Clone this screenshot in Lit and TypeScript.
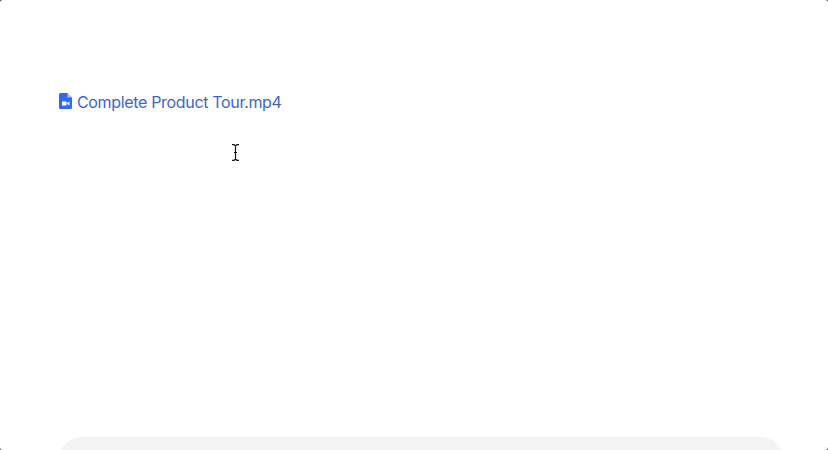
import { LitElement, css, html } from 'lit'
import { customElement } from 'lit/decorators.js'

@customElement('app-root')
export class AppRoot extends LitElement {
  static styles = css`
    :host {
      display: block;
      width: 828px;
      height: 450px;
      background: #555;
      overflow: hidden;
    }
    .page {
      position: relative;
      box-sizing: border-box;
      height: 450px;
      padding: 92px 44px 0 58px;
      display: flex;
      flex-direction: column;
      background: #fff;
      border-radius: 3px;
      overflow: hidden;
      font-family: Inter, 'Liberation Sans', sans-serif;
    }
    .file {
      display: flex;
      align-items: center;
      gap: 4px;
      height: 20px;
      font-size: 16px;
      line-height: 20px;
      letter-spacing: -0.33px;
      color: #3e66c5;
    }
    .file svg {
      width: 15px;
      height: 18px;
      flex: none;
      margin-top: -3px;
    }
    .panel {
      flex: none;
      margin-top: auto;
      margin-bottom: -47px;
      height: 60px;
      background: #f3f4f6;
      border-radius: 24px 24px 0 0;
    }
    .cursor {
      position: absolute;
      left: 231px;
      top: 144px;
      width: 9px;
      height: 17px;
    }
  `

  render() {
    return html`
      <div class="page">
        <div class="file">
          <svg viewBox="0 0 15 18">
            <path fill="#2f6bec" d="M2.500 1h7L14 5.500V15.500A1.500 1.500 0 0 1 12.500 17h-10A1.500 1.500 0 0 1 1 15.500V2.500A1.500 1.500 0 0 1 2.500 1z" />
            <path fill="#a9c4fa" d="M9.500 1 14 5.500H9.500z" />
            <path fill="#fff" d="M4 9.500h4.500v4H4zM9 11l2.500-1.500v4L9 12z" />
          </svg>
          <span>Complete Product Tour.mp4</span>
        </div>
        <div class="panel"></div>
        <svg class="cursor" viewBox="0 0 9 17" fill="none" stroke="#111" stroke-width="1.2">
          <path d="M1 .7h2l1.500 1 1.500-1h2M4.500 1.700v13.600M1 16.300h2l1.500-1 1.500 1h2M3 8.500h3" />
        </svg>
      </div>
    `
  }
}

declare global {
  interface HTMLElementTagNameMap {
    'app-root': AppRoot
  }
}
